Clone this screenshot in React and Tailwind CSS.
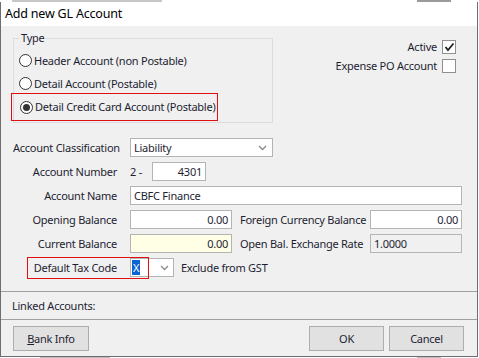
import React from "react";

const txt = "text-[#1e1e32]";

function Chevron() {
  return (
    <svg width="9" height="6" viewBox="0 0 9 6" className="shrink-0">
      <path d="M1 1 L4.5 4.5 L8 1" fill="none" stroke="#8a8a8a" strokeWidth="1.3" />
    </svg>
  );
}

function Radio({ checked }) {
  return (
    <span className="w-[13px] h-[13px] rounded-full border border-[#333333] bg-white flex items-center justify-center shrink-0">
      {checked && <span className="w-[7px] h-[7px] rounded-full bg-[#333333]" />}
    </span>
  );
}

function Check({ checked }) {
  return (
    <span className="w-[14px] h-[14px] border border-[#8f8f8f] bg-white flex items-center justify-center shrink-0">
      {checked && (
        <svg width="11" height="10" viewBox="0 0 11 10">
          <path d="M1.5 5 L4 8 L9.5 1.5" fill="none" stroke="#222" strokeWidth="1.8" />
        </svg>
      )}
    </span>
  );
}

function Label({ children }) {
  return <div className="w-[104px] text-right whitespace-nowrap shrink-0">{children}</div>;
}

function Input({ w, value, align = "right", bg = "bg-white" }) {
  return (
    <div
      className={`${w} h-[19px] border border-[#b4b4b4] ${bg} flex items-center px-[3px] ${
        align === "right" ? "justify-end" : "justify-start"
      } whitespace-nowrap shrink-0`}
    >
      {value}
    </div>
  );
}

export default function App() {
  return (
    <div className={`w-[479px] h-[358px] bg-white overflow-hidden flex flex-col font-['Noto_Sans',sans-serif] text-[11px] tracking-[-0.25px] leading-[14px] ${txt}`}>
      {/* background strip top */}
      <div className="h-[2px] flex shrink-0">
        <div className="ml-[12px] w-[150px] h-[2px] bg-[#c8c8c8]" />
        <div className="ml-[255px] w-[34px] h-[2px] bg-[#9a9a9a]" />
      </div>
      {/* window */}
      <div className="w-[478px] h-[355px] border-l border-r border-b border-[#6e6e6e] flex flex-col shrink-0">
        <div className="h-[24px] bg-white flex items-center pl-[4px] text-[12.5px] tracking-[-0.2px] leading-[16px] text-black shrink-0">
          Add new GL Account
        </div>
        <div className="flex-1 bg-[#f0f0f0] flex flex-col">
          {/* top section */}
          <div className="flex justify-between mt-[5px]">
            <fieldset className="ml-[12px] w-[260px] h-[92px] border border-[#dcdcdc] flex flex-col">
              <legend className="ml-[5px] px-[2px] leading-[14px]">Type</legend>
              <div className="mt-[4px] h-[23px] flex items-center pl-[5px] gap-[2px]">
                <Radio />
                <span className="whitespace-nowrap">Header Account (non Postable)</span>
              </div>
              <div className="h-[23px] flex items-center pl-[5px] gap-[2px]">
                <Radio />
                <span className="whitespace-nowrap">Detail Account (Postable)</span>
              </div>
              <div className="-mt-[2px] -ml-[3px] w-[207px] h-[28px] border border-[#e01010] flex items-center pl-[8px] gap-[2px]">
                <Radio checked />
                <span className="whitespace-nowrap">Detail Credit Card Account (Postable)</span>
              </div>
            </fieldset>
            <div className="mr-[21px] mt-[9px] flex flex-col items-end gap-[5px]">
              <div className="flex items-center gap-[5px] h-[14px]">
                <span>Active</span>
                <Check checked />
              </div>
              <div className="flex items-center gap-[5px] h-[14px]">
                <span>Expense PO Account</span>
                <Check />
              </div>
            </div>
          </div>

          {/* form */}
          <div className="mt-[15px] pl-[12px] flex flex-col gap-[5px]">
            <div className="flex items-center h-[19px]">
              <Label>Account Classification</Label>
              <div className="ml-[13px] w-[143px] h-[19px] border border-[#b4b4b4] bg-white flex items-center justify-between px-[3px] pr-[5px]">
                <span>Liability</span>
                <Chevron />
              </div>
            </div>
            <div className="flex items-center h-[19px]">
              <Label>Account Number</Label>
              <span className="ml-[13px] w-[22px]">2 -</span>
              <Input w="w-[54px]" value="4301" />
            </div>
            <div className="flex items-center h-[19px]">
              <Label>Account Name</Label>
              <div className="ml-[13px]">
                <Input w="w-[332px]" value="CBFC Finance" align="left" />
              </div>
            </div>
            <div className="flex items-center h-[19px]">
              <Label>Opening Balance</Label>
              <div className="ml-[13px]">
                <Input w="w-[102px]" value="0.00" />
              </div>
              <span className="ml-[8px] w-[130px] whitespace-nowrap">Foreign Currency Balance</span>
              <Input w="w-[92px]" value="0.00" />
            </div>
            <div className="flex items-center h-[19px]">
              <Label>Current Balance</Label>
              <div className="ml-[13px]">
                <Input w="w-[102px]" value="0.00" bg="bg-[#ffffe6]" />
              </div>
              <span className="ml-[8px] w-[130px] whitespace-nowrap">Open Bal. Exchange Rate</span>
              <Input w="w-[92px]" value="1.0000" align="left" bg="bg-[#f0f0f0]" />
            </div>
            <div className="relative flex items-center h-[19px]">
              <Label>Default Tax Code</Label>
              <div className="ml-[13px] w-[44px] h-[19px] border border-[#b4b4b4] bg-white flex items-center justify-between pl-[1px] pr-[4px]">
                <span className="bg-[#0a64d2] text-white px-[1px] leading-[15px]">X</span>
                <Chevron />
              </div>
              <span className="ml-[7px] whitespace-nowrap">Exclude from GST</span>
              <div className="absolute left-[14px] -top-[1px] w-[122px] h-[22px] border border-[#e01010]" />
            </div>
          </div>

          {/* linked */}
          <div className="mt-[14px] border-t border-[#a0a0a0] h-[28px] flex items-center pl-[11px]">
            Linked Accounts:
          </div>
          <div className="border-t border-[#a0a0a0] flex items-start pt-[6px] px-[12px]">
            <button className="w-[76px] h-[25px] border border-[#adadad] bg-[#e1e1e1] flex items-center justify-center">
              <span><span className="underline">B</span>ank Info</span>
            </button>
            <div className="flex-1" />
            <button className="w-[75px] h-[25px] border border-[#adadad] bg-[#e1e1e1] flex items-center justify-center">OK</button>
            <button className="ml-[5px] w-[75px] h-[25px] border border-[#adadad] bg-[#e1e1e1] flex items-center justify-center mr-[1px]">
              Cancel
            </button>
          </div>
        </div>
      </div>
      <div className="h-[1px] flex shrink-0">
        <div className="ml-[40px] w-[70px] h-[1px] bg-[#bdbdbd]" />
        <div className="ml-[307px] w-[24px] h-[1px] bg-[#bdbdbd]" />
      </div>
    </div>
  );
}
